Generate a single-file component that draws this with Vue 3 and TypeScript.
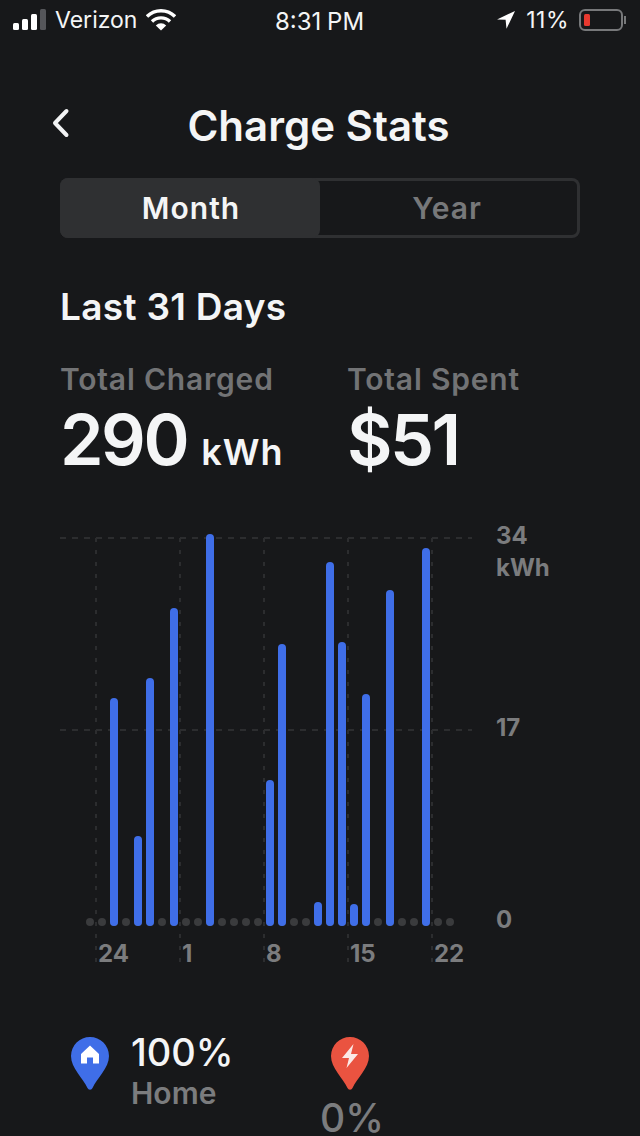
<script setup lang="ts">
const barValues: Record<number, number> = {
  114: 698, 138: 836, 150: 678, 174: 608, 210: 534, 270: 780, 282: 644,
  318: 902, 330: 562, 342: 642, 354: 904, 366: 694, 390: 590, 426: 548,
};
const bars = Object.entries(barValues).map(([x, top]) => ({ x: Number(x), top }));
const dots = Array.from({ length: 31 }, (_, i) => 90 + i * 12);
const gridX = [96, 180, 264, 348, 432];
const gridY = [538, 730];
const xLabels = [
  { x: 98, text: "24" },
  { x: 182, text: "1" },
  { x: 266, text: "8" },
  { x: 350, text: "15" },
  { x: 434, text: "22" },
];
</script>

<template>
  <main class="screen">
    <header class="status">
      <div class="status-left">
        <svg class="signal" width="34" height="24" viewBox="0 0 34 24">
          <rect x="0" y="15" width="6" height="7" rx="1.5" fill="#fff" />
          <rect x="9" y="11" width="6" height="11" rx="1.5" fill="#fff" />
          <rect x="18" y="6" width="6" height="16" rx="1.5" fill="#fff" />
          <rect x="27" y="1" width="6" height="21" rx="1.5" fill="#55565a" />
        </svg>
        <span>Verizon</span>
        <svg class="wifi" width="30" height="24" viewBox="0 0 30 24">
          <path d="M1 8.500a20 20 0 0 1 28 0" fill="none" stroke="#fff" stroke-width="3.400" />
          <path d="M6 13.500a13 13 0 0 1 18 0" fill="none" stroke="#fff" stroke-width="3.400" />
          <path d="M15 22.500 9.800 17.400a7.500 7.500 0 0 1 10.400 0z" fill="#fff" />
        </svg>
      </div>
      <div class="status-time">8:31 PM</div>
      <div class="status-right">
        <svg width="20" height="20" viewBox="0 0 20 20">
          <path d="M19 1 1 9.400l8.600.4.900 9z" fill="#fff" />
        </svg>
        <span>11%</span>
        <div class="battery">
          <div class="battery-level"></div>
        </div>
        <div class="battery-tip"></div>
      </div>
    </header>

    <div class="title-row">
      <svg class="back" width="20" height="32" viewBox="0 0 20 32">
        <path d="M16.500 4 5 16l11.500 12" fill="none" stroke="#f2f3f4" stroke-width="4" stroke-linecap="round" stroke-linejoin="round" />
      </svg>
      <h1>Charge Stats</h1>
    </div>

    <div class="tabs">
      <button type="button" class="tab active">Month</button>
      <button type="button" class="tab">Year</button>
    </div>

    <h2>Last 31 Days</h2>

    <section class="totals">
      <div class="total charged">
        <div class="total-label">Total Charged</div>
        <div class="total-value">290 <small>kWh</small></div>
      </div>
      <div class="total">
        <div class="total-label">Total Spent</div>
        <div class="total-value">$51</div>
      </div>
    </section>

    <svg class="chart" width="640" height="460" viewBox="0 510 640 460">
      <line v-for="y in gridY" :key="y" x1="60" x2="472" :y1="y" :y2="y" class="grid" stroke-dasharray="6 6" />
      <line v-for="x in gridX" :key="x" :x1="x" :x2="x" y1="538" y2="966" class="grid" stroke-dasharray="4 8" />
      <circle v-for="x in dots" :key="x" :cx="x" cy="922" r="4" fill="#3a3b3d" />
      <rect v-for="bar in bars" :key="bar.x" :x="bar.x - 4" :y="bar.top" width="8" :height="926 - bar.top" rx="4" fill="#3f6ee8" />
      <text v-for="label in xLabels" :key="label.x" :x="label.x" y="962" class="axis">{{ label.text }}</text>
      <text x="496" y="544" class="axis">34</text>
      <text x="496" y="576" class="axis">kWh</text>
      <text x="496" y="736" class="axis">17</text>
      <text x="496" y="928" class="axis">0</text>
    </svg>

    <section class="sources">
      <div class="source home">
        <svg width="40" height="54" viewBox="0 0 40 54">
          <path d="M20 1a19 19 0 0 1 19 19c0 12-12 22-16.500 32a2.700 2.700 0 0 1-5 0C13 42 1 32 1 20A19 19 0 0 1 20 1z" fill="#3f6ee8" />
          <path d="M20 9.500 29 18v9.500h-6v-6h-6v6h-6V18z" fill="#fff" />
        </svg>
        <div class="home-text">
          <div class="source-value">100%</div>
          <div class="source-label">Home</div>
        </div>
      </div>
      <div class="source super">
        <svg width="40" height="54" viewBox="0 0 40 54">
          <path d="M20 1a19 19 0 0 1 19 19c0 12-12 22-16.500 32a2.700 2.700 0 0 1-5 0C13 42 1 32 1 20A19 19 0 0 1 20 1z" fill="#ea5340" />
          <path d="M23.500 8 12 22h7l-2.500 10L28 18h-7z" fill="#fbe9e6" />
        </svg>
        <div class="source-value muted">0%</div>
      </div>
    </section>
  </main>
</template>

<style>
html,
body {
  margin: 0;
  background: #17181a;
  overflow: hidden;
}
</style>

<style scoped>
.screen {
  width: 640px;
  height: 1136px;
  overflow: hidden;
  background: #17181a;
  color: #f4f5f6;
  font-family: Inter, "Liberation Sans", sans-serif;
}
.status {
  height: 40px;
  position: relative;
  display: flex;
  align-items: center;
  justify-content: space-between;
  padding: 0 14px 0 13px;
  font-size: 23px;
  color: #f4f5f6;
}
.status-left,
.status-right {
  display: flex;
  align-items: center;
}
.status-left span {
  margin: 0 9px 0 8px;
}
.status-time {
  position: absolute;
  left: 275px;
  top: 7px;
  font-size: 24px;
  word-spacing: -1px;
}
.status-right svg {
  margin-right: 10px;
}
.status-right span {
  margin-right: 10px;
  letter-spacing: 0.5px;
}
.battery {
  width: 44px;
  height: 22px;
  box-sizing: border-box;
  border: 2px solid #77787a;
  border-radius: 6px;
  padding: 3px;
}
.battery-level {
  width: 6px;
  height: 100%;
  background: #e8392f;
  border-radius: 1.5px;
}
.battery-tip {
  width: 2px;
  height: 8px;
  margin-left: 1px;
  background: #77787a;
}
.title-row {
  height: 64px;
  margin-top: 53px;
  position: relative;
  display: flex;
  align-items: center;
  justify-content: center;
}
.back {
  position: absolute;
  left: 50px;
  top: 14px;
}
h1 {
  margin: 0 3px 0 0;
  font-size: 42px;
  font-weight: 600;
  letter-spacing: 0;
}
.tabs {
  margin: 21px 60px 0;
  height: 60px;
  box-sizing: border-box;
  display: grid;
  grid-template-columns: 260px 1fr;
  border-radius: 8px;
  background: #17181a;
  box-shadow: inset 0 0 0 3px #2f3032;
}
.tab {
  border: 0;
  background: transparent;
  padding: 0;
  font: 600 30px Inter, "Liberation Sans", sans-serif;
  letter-spacing: 1px;
  color: #77787a;
}
.tab.active {
  background: #2f3032;
  border-radius: 8px;
  color: #f4f5f6;
  padding-left: 2px;
}
.tab:not(.active) {
  padding-right: 6px;
}
h2 {
  margin: 47px 0 0 60px;
  font-size: 37px;
  line-height: 44px;
  font-weight: 600;
  letter-spacing: 0.3px;
}
.totals {
  display: flex;
  margin: 32px 0 0 60px;
}
.total.charged {
  width: 287px;
}
.total-label {
  font-size: 30px;
  line-height: 36px;
  font-weight: 600;
  letter-spacing: 0.8px;
  color: #727375;
}
.total-value {
  margin-top: 4px;
  font-size: 70px;
  line-height: 78px;
  font-weight: 600;
  letter-spacing: -2.5px;
}
.total-value small {
  font-size: 36px;
  font-weight: 600;
  letter-spacing: 1px;
  margin-left: -1px;
}
.chart {
  display: block;
  margin-top: 19px;
}
.grid {
  stroke: #2c2d2f;
  stroke-width: 2;
}
.axis {
  font: 700 24px Inter, "Liberation Sans", sans-serif;
  fill: #7b7c7e;
}
.sources {
  display: flex;
  margin: 66px 0 0 70px;
}
.source {
  display: flex;
  gap: 21px;
  align-items: flex-start;
}
.source.home {
  width: 260px;
}
.home-text {
  margin-top: -6px;
}
.source.super {
  flex-direction: column;
  align-items: center;
  gap: 6px;
  width: 60px;
  margin-left: -10px;
}
.source-value {
  font-size: 38px;
  line-height: 44px;
  font-weight: 500;
}
.source-value.muted {
  font-size: 39px;
  color: #7b7c7e;
  margin-left: 4px;
}
.source-label {
  font-size: 30px;
  line-height: 38px;
  font-weight: 600;
  color: #7b7c7e;
}
</style>
